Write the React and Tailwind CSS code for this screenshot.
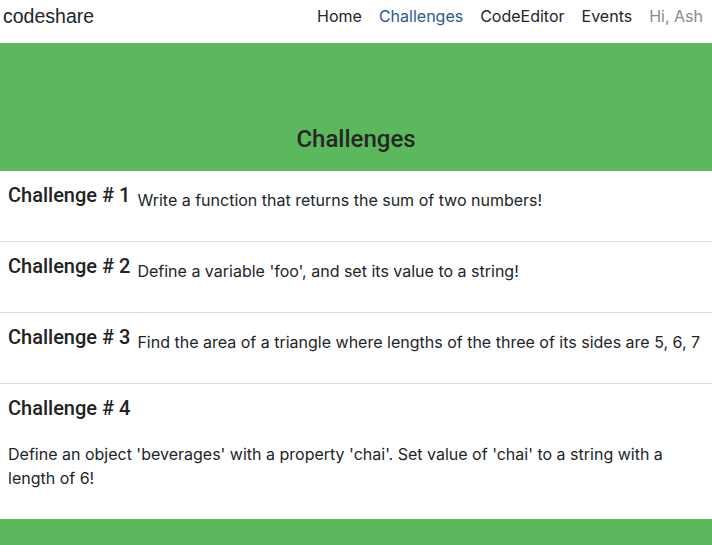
import React from "react";

const challenges = [
  { n: 1, text: "Write a function that returns the sum of two numbers!" },
  { n: 2, text: "Define a variable 'foo', and set its value to a string!" },
  { n: 3, text: "Find the area of a triangle where lengths of the three of its sides are 5, 6, 7" },
  { n: 4, text: "Define an object 'beverages' with a property 'chai'. Set value of 'chai' to a string with a length of 6!" },
];

export default function App() {
  return (
    <div className="w-[712px] min-h-[545px] bg-white text-[#212529]" style={{ fontFamily: "Inter, 'Liberation Sans', sans-serif" }}>
      <nav className="h-[44px] flex items-start justify-between pl-[3px] pr-[9px] pt-[5px] border-b border-[#5cb85c]">
        <span className="text-[19.5px] leading-[22px] text-[#212529] font-['Liberation_Sans',sans-serif]">codeshare</span>
        <ul className="flex items-center gap-[17px] text-[16px] leading-[22px]">
          <li className="text-[#212529]">Home</li>
          <li className="text-[#2a5a8f]">Challenges</li>
          <li className="text-[#212529]">CodeEditor</li>
          <li className="text-[#212529]">Events</li>
          <li className="text-[#8a8a8a]">Hi, Ash</li>
        </ul>
      </nav>
      <header className="h-[127px] bg-[#5cb85c] flex items-end justify-center pb-[19px]">
        <h1 className="text-[24px] leading-[26px] text-[#262626] font-medium font-['Roboto',sans-serif]">Challenges</h1>
      </header>
      <div>
        {challenges.map((c, i) => (
          <div
            key={c.n}
            className={`flex flex-wrap items-start gap-y-[19px] px-[8px] pt-[13px] pb-[29px] ${i < challenges.length - 1 ? "border-b border-[#dddddd]" : ""}`}
          >
            <h4 className="text-[20px] leading-[22px] text-[#222] font-medium mr-[7px] font-['Roboto',sans-serif] shrink-0">
              Challenge # {c.n}
            </h4>
            <p className="text-[16px] leading-[24px] mt-[4px]">{c.text}</p>
          </div>
        ))}
      </div>
      <footer className="h-[26px] bg-[#5cb85c]" />
    </div>
  );
}
